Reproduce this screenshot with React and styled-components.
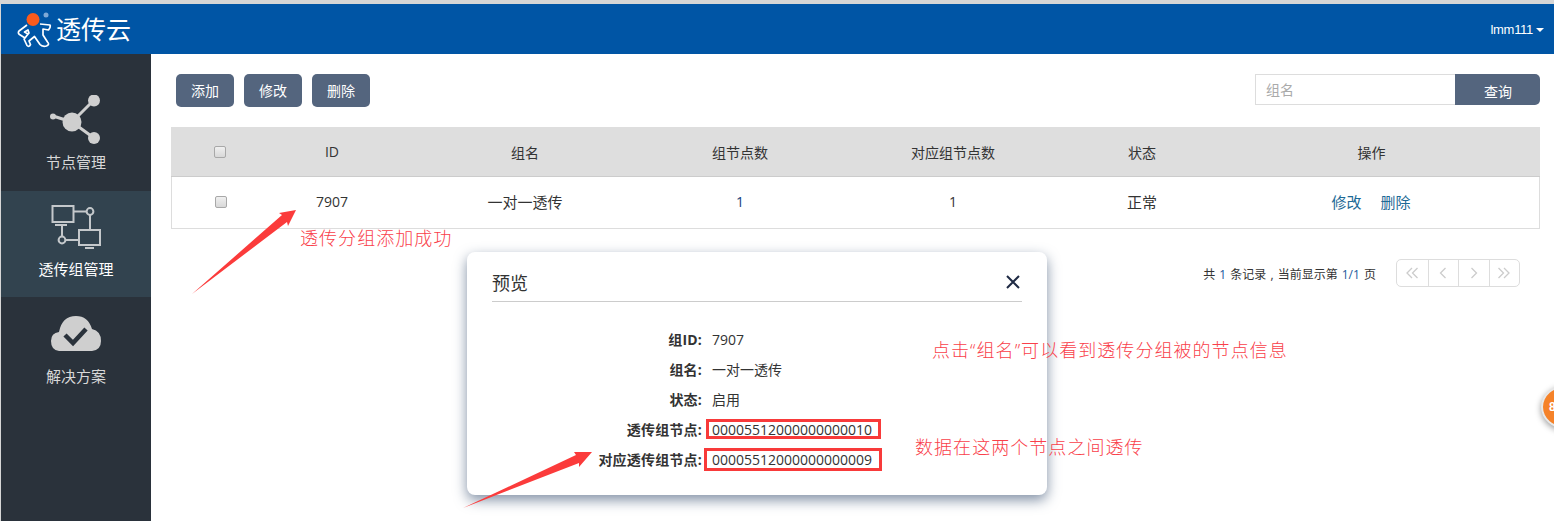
import React from "react";
import styled, { createGlobalStyle } from "styled-components";

const GlobalStyle = createGlobalStyle`
  html, body {
    margin: 0;
    padding: 0;
    background: #fff;
    overflow: hidden;
  }
  body {
    font-family: "Open Sans", "Noto Sans CJK SC", sans-serif;
    font-size: 14px;
    color: #333;
  }
`;

const Page = styled.div`
  position: relative;
  width: 1554px;
  height: 521px;
  overflow: hidden;
  box-sizing: border-box;
  padding: 4px 0 0 1px;
  background: #d6d6d6;
  display: flex;
  flex-direction: column;
`;

const Header = styled.header`
  height: 50px;
  flex: none;
  background: #0055a5;
  display: flex;
  align-items: center;
  justify-content: space-between;
  padding: 0 10px 0 14px;
  color: #fff;
`;

const Brand = styled.div`
  display: flex;
  align-items: center;
  gap: 3px;
  font-size: 25px;
  line-height: 1;
`;

const UserMenu = styled.div`
  display: flex;
  align-items: center;
  gap: 3px;
  font-family: "Liberation Sans", sans-serif;
  font-size: 13px;
  letter-spacing: -0.3px;
`;

const Caret = styled.span`
  width: 0;
  height: 0;
  border-left: 4px solid transparent;
  border-right: 4px solid transparent;
  border-top: 4px solid #fff;
  margin-top: 2px;
`;

const Body = styled.div`
  flex: 1;
  display: flex;
  min-height: 0;
  background: #fff;
`;

const Sidebar = styled.nav`
  width: 150px;
  flex: none;
  background: #2a323b;
  display: flex;
  flex-direction: column;
`;

const NavItem = styled.div`
  height: ${(p) => p.$h}px;
  box-sizing: border-box;
  padding-top: ${(p) => p.$top}px;
  display: flex;
  flex-direction: column;
  align-items: center;
  gap: ${(p) => p.$gap}px;
  font-size: 15px;
  line-height: 20px;
  color: ${(p) => (p.$active ? "#fff" : "#d8d8d8")};
  background: ${(p) => (p.$active ? "#32434f" : "transparent")};
`;

const Content = styled.main`
  flex: 1;
  min-width: 0;
  padding: 20px 14px 0 20px;
`;

const Toolbar = styled.div`
  display: flex;
  justify-content: space-between;
  padding-left: 5px;
  height: 33px;
  margin-bottom: 20px;
`;

const ButtonRow = styled.div`
  display: flex;
  gap: 10px;
`;

const ActionButton = styled.button`
  width: 58px;
  height: 33px;
  border: 0;
  padding: 0 0 2px;
  border-radius: 5px;
  background: #54657e;
  color: #fff;
  font: inherit;
  font-size: 14px;
`;

const Search = styled.div`
  display: flex;
  height: 31px;
`;

const SearchInput = styled.input`
  width: 200px;
  box-sizing: border-box;
  border: 1px solid #ddd;
  border-right: 0;
  padding: 0 10px;
  font: inherit;
  outline: none;
  &::placeholder {
    color: #aaa;
  }
`;

const SearchButton = styled.button`
  width: 85px;
  border: 0;
  padding: 2px 0 0 1px;
  border-radius: 0 5px 5px 0;
  background: #54657e;
  color: #fff;
  font: inherit;
`;

const Table = styled.div`
  width: 1369px;
`;

const Row = styled.div`
  display: grid;
  grid-template-columns: ${(p) => (p.$head ? "98px" : "97px")} 126px 260px 170px 256px 122px 1fr;
  align-items: center;
  box-sizing: border-box;
  height: ${(p) => p.$h}px;
  background: ${(p) => (p.$head ? "#dedede" : "#fff")};
  border: 1px solid #ddd;
  border-width: ${(p) => (p.$head ? "0" : "0 1px 1px")};
  border-bottom: ${(p) => (p.$head ? "1px solid #ccc" : "1px solid #ddd")};
  padding-bottom: ${(p) => (p.$head ? "0" : "2px")};
  text-align: center;
`;

const Cell = styled.div`
  color: ${(p) => p.$color || "#333"};
  font-size: ${(p) => p.$size || 14}px;
  display: flex;
  justify-content: center;
  gap: 19px;
`;

const Check = styled.span`
  width: 10px;
  height: 10px;
  border: 1px solid #a8a8a8;
  border-radius: 2px;
  background: linear-gradient(#f0f0f0, #d8d8d8);
`;

const TableLink = styled.span`
  color: #1d6a96;
`;

const Pager = styled.div`
  display: flex;
  align-items: center;
  justify-content: flex-end;
  gap: 20px;
  margin: 30px 20px 0 0;
  font-size: 12px;
`;

const PagerInfo = styled.span`
  color: #333;
  padding-top: 2px;
  word-spacing: 1px;
  b {
    color: #245a9c;
    font-weight: 400;
  }
`;

const PagerButtons = styled.div`
  display: flex;
  height: 26px;
  border: 1px solid #ddd;
  border-radius: 5px;
`;

const PagerButton = styled.span`
  width: 30.5px;
  box-sizing: border-box;
  display: flex;
  align-items: center;
  justify-content: center;
  border-left: ${(p) => (p.$first ? "0" : "1px solid #ddd")};
`;

const Modal = styled.section`
  position: absolute;
  left: 467px;
  top: 252px;
  width: 580px;
  height: 243px;
  box-sizing: border-box;
  padding: 0 25px;
  background: #fff;
  border-radius: 8px;
  box-shadow: 0 5px 13px rgba(62, 84, 116, 0.65);
`;

const ModalHead = styled.div`
  height: 50px;
  box-sizing: border-box;
  border-bottom: 1px solid #ccc;
  display: flex;
  align-items: center;
  justify-content: space-between;
  font-size: 18px;
  color: #333;
  padding: 12px 2px 2px 0;
  margin-bottom: 22px;
`;

const InfoRow = styled.div`
  display: flex;
  height: 30px;
  align-items: center;
  gap: 10px;
`;

const InfoLabel = styled.span`
  width: 210px;
  text-align: right;
  font-weight: 700;
  letter-spacing: 0.2px;
  color: #333;
`;

const InfoValue = styled.span`
  color: #333;
`;

const Note = styled.div`
  position: absolute;
  left: ${(p) => p.$x}px;
  top: ${(p) => p.$y}px;
  font-size: 18px;
  letter-spacing: 1.05px;
  line-height: 24px;
  font-weight: 300;
  color: #f9404a;
  white-space: nowrap;
`;

const RedBox = styled.div`
  position: absolute;
  left: ${(p) => p.$x}px;
  top: ${(p) => p.$y}px;
  width: ${(p) => p.$w}px;
  height: ${(p) => p.$h}px;
  box-sizing: border-box;
  border: 3px solid #f83a3a;
`;

const Overlay = styled.svg`
  position: absolute;
  left: 0;
  top: 0;
  pointer-events: none;
`;

const FloatBadge = styled.div`
  position: absolute;
  left: 1541px;
  top: 385px;
  width: 40px;
  height: 40px;
  border-radius: 50%;
  border: 2px solid #e8e8e8;
  background: #f58229;
  box-shadow: 0 2px 6px rgba(0, 0, 0, 0.4);
  color: #fff;
  font-family: "Liberation Sans", sans-serif;
  font-weight: 700;
  font-size: 12px;
  line-height: 40px;
  padding-left: 6px;
  box-sizing: content-box;
`;

const Logo = () => (
  <svg width="38" height="38" viewBox="15 10 38 38">
    <path
      d="M27 25 L19 31 Q17.5 33 19.5 34.5 L25 38 L28 34 L24.5 32 L28 30 L29 33 L24 39 L27 45.5 Q29 47.5 30.5 44.5 L29 41 L34.5 36.5 L40 44.5 Q42 47 46.5 46 Q50 44.5 47.5 42 L43 35 L43 29 L48.5 30 Q51 27 50 25 L40 24"
      fill="none"
      stroke="#fff"
      strokeWidth="1.7"
      strokeLinejoin="round"
    />
    <circle cx="33" cy="19.5" r="6.5" fill="#fb5b1c" />
    <circle cx="46" cy="15" r="2.5" fill="#7fa9d6" />
  </svg>
);

const ShareIcon = () => (
  <svg width="58" height="50" viewBox="48 95 58 50">
    <g stroke="#cfcfcf" strokeWidth="3" fill="#cfcfcf">
      <path d="M73 122 L95 100 M73 122 L95 138 M73 122 L54 116" />
      <circle cx="73" cy="122" r="9.5" stroke="none" />
      <circle cx="95" cy="100.5" r="6" stroke="none" />
      <circle cx="95" cy="138" r="6" stroke="none" />
      <circle cx="54" cy="116.5" r="3" stroke="none" />
    </g>
  </svg>
);

const GroupIcon = () => (
  <svg width="52" height="46" viewBox="50 205 52 46">
    <g stroke="#c4c8cb" strokeWidth="2" fill="none">
      <rect x="52.5" y="207" width="21" height="16" />
      <rect x="79" y="231" width="21" height="15" />
      <path d="M55 226 H67 M85 249 H94" />
      <path d="M74 212.5 H86.5 M90 216 V231 M62 226 V237.5 M65.5 241 H79" />
      <circle cx="90" cy="212.5" r="3.4" />
      <circle cx="62" cy="241" r="3.4" />
    </g>
  </svg>
);

const CloudIcon = () => (
  <svg width="52" height="37" viewBox="50 315 52 37">
    <path
      d="M59 351 Q51 350 51 341 Q51 333 59 332 Q62 316 76 316 Q88 316 92 329 Q101 331 101 341 Q101 350 92 351 Z"
      fill="#cfcfcf"
    />
    <path d="M65 335 L73 343 L86 329" fill="none" stroke="#2a323b" strokeWidth="4.5" />
  </svg>
);

const Chevrons = ({ dir, double }) => {
  const flip = dir === "left" ? "scale(-1 1) translate(-16 0)" : undefined;
  return (
    <svg width="16" height="12" viewBox="0 0 16 12">
      <g transform={flip} fill="none" stroke="#cccccc" strokeWidth="1.3">
        {double ? <path d="M2.5 1 L7.5 6 L2.5 11 M8 1 L13 6 L8 11" /> : <path d="M5.5 1 L10.5 6 L5.5 11" />}
      </g>
    </svg>
  );
};

const CloseIcon = () => (
  <svg width="14" height="14" viewBox="0 0 14 14">
    <path d="M1 1 L13 13 M13 1 L1 13" stroke="#1f2a44" strokeWidth="2" />
  </svg>
);

export default function App() {
  return (
    <Page>
      <GlobalStyle />
      <Header>
        <Brand>
          <Logo />
          透传云
        </Brand>
        <UserMenu>
          lmm111
          <Caret />
        </UserMenu>
      </Header>
      <Body>
        <Sidebar>
          <NavItem $h={137} $top={41} $gap={7}>
            <ShareIcon />
            节点管理
          </NavItem>
          <NavItem $h={106} $top={13} $gap={9} $active>
            <GroupIcon />
            透传组管理
          </NavItem>
          <NavItem $h={120} $top={18} $gap={14}>
            <CloudIcon />
            解决方案
          </NavItem>
        </Sidebar>
        <Content>
          <Toolbar>
            <ButtonRow>
              <ActionButton>添加</ActionButton>
              <ActionButton>修改</ActionButton>
              <ActionButton>删除</ActionButton>
            </ButtonRow>
            <Search>
              <SearchInput placeholder="组名" />
              <SearchButton>查询</SearchButton>
            </Search>
          </Toolbar>
          <Table>
            <Row $head $h={50}>
              <Cell><Check /></Cell>
              <Cell>ID</Cell>
              <Cell>组名</Cell>
              <Cell>组节点数</Cell>
              <Cell>对应组节点数</Cell>
              <Cell>状态</Cell>
              <Cell>操作</Cell>
            </Row>
            <Row $h={52}>
              <Cell><Check /></Cell>
              <Cell>7907</Cell>
              <Cell $size={15}>一对一透传</Cell>
              <Cell $color="#14407c">1</Cell>
              <Cell>1</Cell>
              <Cell $size={15}>正常</Cell>
              <Cell $size={15}>
                <TableLink>修改</TableLink>
                <TableLink>删除</TableLink>
              </Cell>
            </Row>
          </Table>
          <Pager>
            <PagerInfo>共 <b>1</b> 条记录 , 当前显示第 <b>1/1</b> 页</PagerInfo>
            <PagerButtons>
              <PagerButton $first><Chevrons dir="left" double /></PagerButton>
              <PagerButton><Chevrons dir="left" /></PagerButton>
              <PagerButton><Chevrons dir="right" /></PagerButton>
              <PagerButton><Chevrons dir="right" double /></PagerButton>
            </PagerButtons>
          </Pager>
        </Content>
      </Body>

      <Modal>
        <ModalHead>
          预览
          <CloseIcon />
        </ModalHead>
        <InfoRow><InfoLabel>组ID:</InfoLabel><InfoValue>7907</InfoValue></InfoRow>
        <InfoRow><InfoLabel>组名:</InfoLabel><InfoValue>一对一透传</InfoValue></InfoRow>
        <InfoRow><InfoLabel>状态:</InfoLabel><InfoValue>启用</InfoValue></InfoRow>
        <InfoRow><InfoLabel>透传组节点:</InfoLabel><InfoValue>00005512000000000010</InfoValue></InfoRow>
        <InfoRow><InfoLabel>对应透传组节点:</InfoLabel><InfoValue>00005512000000000009</InfoValue></InfoRow>
      </Modal>

      <RedBox $x={706} $y={419} $w={175} $h={20} />
      <RedBox $x={704} $y={448} $w={178} $h={23} />
      <Note $x={300} $y={226}>透传分组添加成功</Note>
      <Note $x={932} $y={338}>点击“组名”可以看到透传分组被的节点信息</Note>
      <Note $x={915} $y={435}>数据在这两个节点之间透传</Note>
      <Overlay width="1554" height="521" viewBox="0 0 1554 521">
        <polygon points="192,294 282,215 279,213 296,210 288,226 287,222" fill="#fb3b3b" />
        <polygon points="463,508 576,455 574,452 592,452 579,467 579,463" fill="#fb3b3b" />
      </Overlay>
      <FloatBadge>8</FloatBadge>
    </Page>
  );
}
